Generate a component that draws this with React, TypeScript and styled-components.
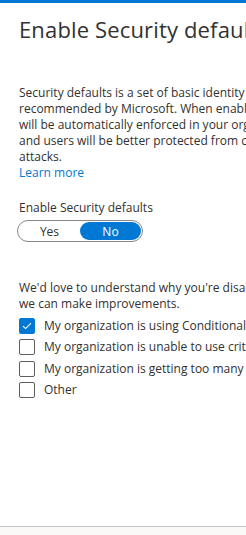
import React from 'react'
import styled, { createGlobalStyle } from 'styled-components'

const GlobalStyle = createGlobalStyle`
  html, body {
    margin: 0;
    padding: 0;
    background: #ffffff;
    overflow: hidden;
  }
  body {
    font-family: "Open Sans", "Noto Sans", sans-serif;
    color: #323130;
  }
`

const Page = styled.div`
  width: 246px;
  height: 535px;
  display: flex;
  flex-direction: column;
  overflow: hidden;
  border-top: 3px solid #0078d4;
  box-sizing: border-box;
`

const Panel = styled.div`
  flex: 1;
  padding: 12px 0 0 19px;
  display: flex;
  flex-direction: column;
`

const Title = styled.h1`
  margin: 0;
  font-size: 22px;
  font-weight: 400;
  line-height: 28px;
  white-space: nowrap;
  letter-spacing: 0.15px;
`

const Text = styled.p<{ $top: number }>`
  margin: ${(p) => p.$top}px 0 0;
  font-size: 12px;
  line-height: 16px;
  white-space: nowrap;
`

const Link = styled.a`
  color: #0078d4;
  text-decoration: none;
  display: block;
`

const Label = styled.div`
  margin-top: 19px;
  font-size: 12px;
  line-height: 16px;
`

const Toggle = styled.div`
  margin-top: 4px;
  margin-left: -2px;
  width: 126px;
  height: 22px;
  box-sizing: border-box;
  border: 1px solid #8a8886;
  border-radius: 11px;
  display: grid;
  grid-template-columns: 1fr 1fr;
  padding: 1px;
`

const ToggleOption = styled.div<{ $active?: boolean }>`
  display: flex;
  align-items: center;
  justify-content: center;
  font-size: 12px;
  border-radius: 10px;
  background: ${(p) => (p.$active ? '#0078d4' : 'transparent')};
  color: ${(p) => (p.$active ? '#ffffff' : '#323130')};
`

const CheckList = styled.div`
  margin-top: 6px;
  display: flex;
  flex-direction: column;
  gap: 5px;
`

const CheckRow = styled.label`
  display: flex;
  align-items: center;
  gap: 9px;
  font-size: 12px;
  line-height: 16.3px;
  white-space: nowrap;
`

const Box = styled.span<{ $checked?: boolean }>`
  width: 16px;
  height: 16px;
  box-sizing: border-box;
  flex: none;
  border-radius: 2px;
  border: 1px solid ${(p) => (p.$checked ? '#0078d4' : '#605e5c')};
  background: ${(p) => (p.$checked ? '#0078d4' : '#ffffff')};
  display: flex;
  align-items: center;
  justify-content: center;
`

const Footer = styled.div`
  height: 8px;
  border-top: 1px solid #c8c6c4;
  background: #faf9f8;
`

const reasons = [
  'My organization is using Conditional Access',
  'My organization is unable to use critical apps',
  'My organization is getting too many MFA challenges',
  'Other',
]

export default function App() {
  return (
    <>
      <GlobalStyle />
      <Page>
        <Panel>
          <Title>Enable Security defaults</Title>
          <Text $top={42}>
            Security defaults is a set of basic identity security mechanisms
            <br />
            recommended by Microsoft. When enabled, these recommendations
            <br />
            will be automatically enforced in your organization. Administrators
            <br />
            and users will be better protected from common identity-related
            <br />
            attacks.
            <Link href="#">Learn more</Link>
          </Text>
          <Label>Enable Security defaults</Label>
          <Toggle>
            <ToggleOption>Yes</ToggleOption>
            <ToggleOption $active>No</ToggleOption>
          </Toggle>
          <Text $top={38}>
            We'd love to understand why you're disabling Security defaults so
            <br />
            we can make improvements.
          </Text>
          <CheckList>
            {reasons.map((r, i) => (
              <CheckRow key={r}>
                <Box $checked={i === 0}>
                  {i === 0 ? (
                    <svg width="10" height="8" viewBox="0 0 10 8">
                      <path d="M1 4.2 L3.6 6.6 L9 1.2" fill="none" stroke="#fff" strokeWidth="1.1" />
                    </svg>
                  ) : null}
                </Box>
                {r}
              </CheckRow>
            ))}
          </CheckList>
        </Panel>
        <Footer />
      </Page>
    </>
  )
}
